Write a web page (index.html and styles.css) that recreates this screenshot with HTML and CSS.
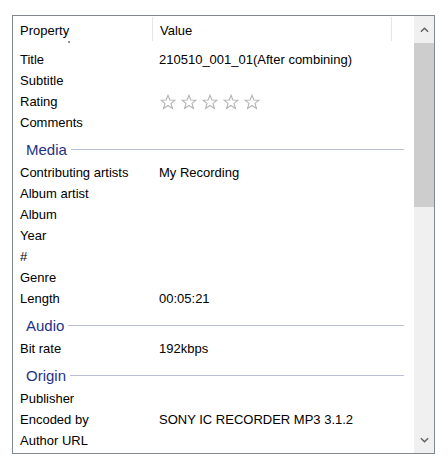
FILE: index.html
```html
<!DOCTYPE html>
<html>
<head>
<meta charset="utf-8">
<link rel="stylesheet" href="styles.css">
</head>
<body>
<div class="panel">
  <div class="main">
    <div class="header">
      <div class="hcell col1">Property</div>
      <div class="hcell col2">Value</div>
      <div class="hcell col3"></div>
    </div>
    <div class="gap"><span class="dot"></span></div>
    <div class="row"><span class="k">Title</span><span class="v">210510_001_01(After combining)</span></div>
    <div class="row"><span class="k">Subtitle</span><span class="v"></span></div>
    <div class="row"><span class="k">Rating</span><span class="v stars">
      <svg class="star" viewBox="0 0 16 16"><path d="M8 1.2 L9.9 6 L15 6.2 L11 9.4 L12.4 14.4 L8 11.5 L3.6 14.4 L5 9.4 L1 6.2 L6.1 6 Z"/></svg>
      <svg class="star" viewBox="0 0 16 16"><path d="M8 1.2 L9.9 6 L15 6.2 L11 9.4 L12.4 14.4 L8 11.5 L3.6 14.4 L5 9.4 L1 6.2 L6.1 6 Z"/></svg>
      <svg class="star" viewBox="0 0 16 16"><path d="M8 1.2 L9.9 6 L15 6.2 L11 9.4 L12.4 14.4 L8 11.5 L3.6 14.4 L5 9.4 L1 6.2 L6.1 6 Z"/></svg>
      <svg class="star" viewBox="0 0 16 16"><path d="M8 1.2 L9.9 6 L15 6.2 L11 9.4 L12.4 14.4 L8 11.5 L3.6 14.4 L5 9.4 L1 6.2 L6.1 6 Z"/></svg>
      <svg class="star" viewBox="0 0 16 16"><path d="M8 1.2 L9.9 6 L15 6.2 L11 9.4 L12.4 14.4 L8 11.5 L3.6 14.4 L5 9.4 L1 6.2 L6.1 6 Z"/></svg>
    </span></div>
    <div class="row"><span class="k">Comments</span><span class="v"></span></div>
    <div class="section"><span class="stitle">Media</span><span class="sline"></span></div>
    <div class="row"><span class="k">Contributing artists</span><span class="v">My Recording</span></div>
    <div class="row"><span class="k">Album artist</span><span class="v"></span></div>
    <div class="row"><span class="k">Album</span><span class="v"></span></div>
    <div class="row"><span class="k">Year</span><span class="v"></span></div>
    <div class="row"><span class="k">#</span><span class="v"></span></div>
    <div class="row"><span class="k">Genre</span><span class="v"></span></div>
    <div class="row"><span class="k">Length</span><span class="v">00:05:21</span></div>
    <div class="section"><span class="stitle">Audio</span><span class="sline"></span></div>
    <div class="row"><span class="k">Bit rate</span><span class="v">192kbps</span></div>
    <div class="section"><span class="stitle">Origin</span><span class="sline"></span></div>
    <div class="row"><span class="k">Publisher</span><span class="v"></span></div>
    <div class="row"><span class="k">Encoded by</span><span class="v">SONY IC RECORDER MP3 3.1.2</span></div>
    <div class="row"><span class="k">Author URL</span><span class="v"></span></div>
  </div>
  <div class="scrollbar">
    <div class="sbtn">
      <svg viewBox="0 0 10 6" class="chev"><path d="M1 5 L5 1 L9 5" /></svg>
    </div>
    <div class="thumb"></div>
    <div class="track"></div>
    <div class="sbtn">
      <svg viewBox="0 0 10 6" class="chev"><path d="M1 1 L5 5 L9 1" /></svg>
    </div>
  </div>
</div>
</body>
</html>
```

FILE: styles.css
```css
html, body {
  margin: 0;
  padding: 0;
  background: #ffffff;
}
body {
  font-family: "Liberation Sans", Arial, sans-serif;
  font-size: 13px;
  color: #000;
}
.panel {
  margin: 15px 0 0 12px;
  width: 423px;
  height: 439px;
  box-sizing: border-box;
  border: 1px solid #828790;
  display: flex;
  overflow: hidden;
  background: #fff;
}
.main {
  flex: 1;
  overflow: hidden;
  min-width: 0;
}
.header {
  display: flex;
  height: 26px;
}
.hcell {
  display: flex;
  align-items: center;
  padding-left: 7px;
  box-sizing: border-box;
  height: 26px;
}
.col1 {
  width: 140px;
  border-right: 1px solid #e5e5e5;
  height: 24px;
  margin-top: 1px;
  padding-top: 2px;
}
.col2 {
  width: 239px;
  border-right: 1px solid #e5e5e5;
  height: 24px;
  margin-top: 1px;
  padding-top: 2px;
}
.col3 {
  flex: 1;
}
.gap {
  height: 7px;
  position: relative;
}
.dot {
  position: absolute;
  left: 55px;
  top: -1px;
  width: 2px;
  height: 2px;
  background: #8a90b8;
}
.row {
  display: flex;
  height: 21px;
  align-items: center;
  white-space: nowrap;
}
.k {
  width: 139px;
  padding-left: 7px;
  box-sizing: border-box;
}
.v {
  padding-left: 7px;
}
.stars {
  display: flex;
  gap: 5px;
  padding-left: 8px;
  padding-top: 1px;
}
.star {
  width: 16px;
  height: 16px;
  fill: none;
  stroke: #b4b4b4;
  stroke-width: 1.1;
  stroke-linejoin: miter;
}
.section {
  height: 29px;
  display: flex;
  align-items: center;
  padding-left: 13px;
  padding-top: 3px;
  box-sizing: border-box;
  padding-right: 10px;
}
.stitle {
  color: #1e3287;
  font-size: 15px;
  margin-right: 4px;
}
.sline {
  flex: 1;
  height: 1px;
  background: #b8bfd6;
  margin-top: 1px;
}
.scrollbar {
  width: 20px;
  display: flex;
  flex-direction: column;
  background: #f0f0f0;
}
.sbtn {
  height: 27px;
  display: flex;
  align-items: center;
  justify-content: center;
}
.chev {
  width: 9px;
  height: 6px;
  fill: none;
  stroke: #606060;
  stroke-width: 1.6;
}
.thumb {
  height: 164px;
  background: #cdcdcd;
}
.track {
  flex: 1;
}
```
